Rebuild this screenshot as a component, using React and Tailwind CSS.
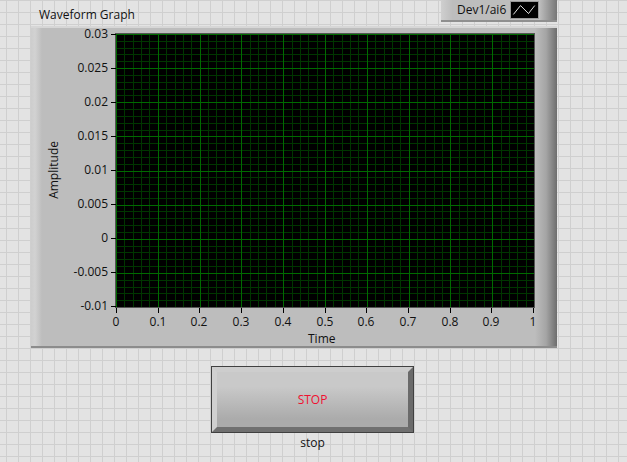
const font = { fontFamily: '"Open Sans","Noto Sans",sans-serif' };
const X = ["0", "0.1", "0.2", "0.3", "0.4", "0.5", "0.6", "0.7", "0.8", "0.9", "1"];
const Y = ["0.03", "0.025", "0.02", "0.015", "0.01", "0.005", "0", "-0.005", "-0.01"];
const W = 418, H = 273;

function Plot() {
  const minorX = Array.from({ length: 51 }, (_, i) => Math.round((i * W) / 50) + 0.5);
  const minorY = Array.from({ length: 41 }, (_, i) => Math.round((i * H) / 40) + 0.5);
  return (
    <svg width={W} height={H} className="block bg-black" shapeRendering="crispEdges">
      {minorX.map((x, i) => i % 5 ? <line key={i} x1={x} x2={x} y1="0" y2={H} stroke="#003600" /> : null)}
      {minorY.map((y, i) => i % 5 ? <line key={i} x1="0" x2={W} y1={y} y2={y} stroke="#003600" /> : null)}
      {minorX.map((x, i) => i % 5 ? null : <line key={i} x1={x} x2={x} y1="0" y2={H} stroke="#006a00" />)}
      {minorY.map((y, i) => i % 5 ? null : <line key={i} x1="0" x2={W} y1={y} y2={y} stroke="#006a00" />)}
    </svg>
  );
}

export default function App() {
  return (
    <div
      style={font}
      className="w-[627px] h-[462px] overflow-hidden text-[12px] leading-[16px] text-[#111] bg-[#e3e3e3] bg-[linear-gradient(#cfcfcf_1px,transparent_1px),linear-gradient(90deg,#cfcfcf_1px,transparent_1px)] bg-[size:12px_12px] bg-[position:0_0,6px_0]"
    >
      <div className="flex h-[26px] pl-[39px] pr-[70px] justify-between">
        <div className="pt-[7px]">Waveform Graph</div>
        <div className="w-[116px] h-[22px] flex items-center pl-[16px] gap-[6px] border-b-2 border-[#8f8f8f] bg-[linear-gradient(90deg,#cfcfcf_0%,#bdbdbd_10%,#bdbdbd_85%,#777_100%)]">
          <span className="w-[47px]">Dev1/ai6</span>
          <svg width="29" height="18" className="bg-black border border-[#999]" viewBox="0 0 29 18">
            <path d="M2 14 L10 4 L19 13 L26 4" fill="none" stroke="#fff" strokeWidth="1" />
          </svg>
        </div>
      </div>

      <div className="relative ml-[31px] w-[526px] h-[322px] border-t-2 border-[#d6d6d6] border-b-2 border-b-[#8c8c8c] bg-[linear-gradient(90deg,#cdcdcd_0px,#d2d2d2_4px,#bdbdbd_11px,#bdbdbd_504px,#a5a5a5_515px,#6d6d6d_526px)]">
        <div className="absolute left-[85px] top-[6px] w-[418px] h-[273px] outline-1 outline-[#555]">
          <Plot />
        </div>
        {Y.map((t, i) => (
          <div key={t} className="absolute right-[441px] flex items-center gap-[3px] h-[16px]" style={{ top: Math.round(6 + (i * 272) / 8) - 8 }}>
            <span>{t}</span>
            <span className="w-[5px] h-px bg-black" />
          </div>
        ))}
        {X.map((t, i) => (
          <div key={t} className="absolute w-[30px] flex flex-col items-center" style={{ left: Math.round(85 + (i * 417) / 10) - 15, top: 280 }}>
            <span className="w-px h-[5px] bg-black" />
            <span className="mt-[1px]">{t}</span>
          </div>
        ))}
        <div className="absolute left-[15px] top-[113px] [writing-mode:vertical-rl] rotate-180 font-medium">Amplitude</div>
        <div className="absolute left-[277px] top-[303px]">Time</div>
      </div>

      <div className="mt-[18px] ml-[211px] w-[203px] h-[67px] border border-[#404040] bg-[linear-gradient(#c9c9c9,#c9c9c9_30%,#ababab_80%)]">
        <div className="h-full flex items-center justify-center border-[5px] border-t-[#cdcdcd] border-l-[#d0d0d0] border-r-[#6a6a6a] border-b-[#707070] text-[#f01030]">
          STOP
        </div>
      </div>
      <div className="mt-[2px] ml-[211px] w-[203px] text-center">stop</div>
    </div>
  );
}
